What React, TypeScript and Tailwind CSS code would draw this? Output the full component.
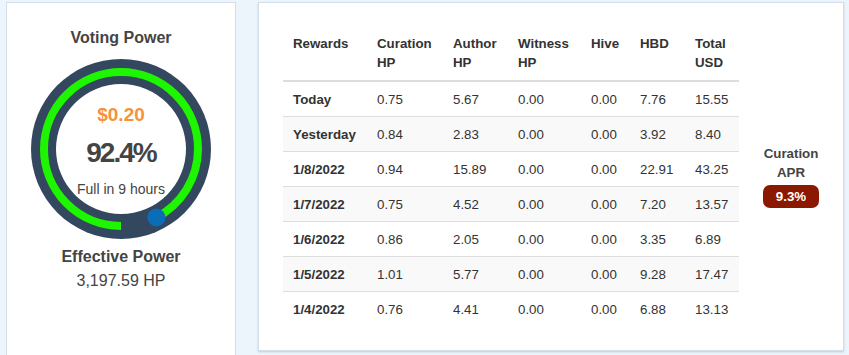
const rows = [
  { label: "Today", cur: "0.75", author: "5.67", witness: "0.00", hive: "0.00", hbd: "7.76", total: "15.55" },
  { label: "Yesterday", cur: "0.84", author: "2.83", witness: "0.00", hive: "0.00", hbd: "3.92", total: "8.40" },
  { label: "1/8/2022", cur: "0.94", author: "15.89", witness: "0.00", hive: "0.00", hbd: "22.91", total: "43.25" },
  { label: "1/7/2022", cur: "0.75", author: "4.52", witness: "0.00", hive: "0.00", hbd: "7.20", total: "13.57" },
  { label: "1/6/2022", cur: "0.86", author: "2.05", witness: "0.00", hive: "0.00", hbd: "3.35", total: "6.89" },
  { label: "1/5/2022", cur: "1.01", author: "5.77", witness: "0.00", hive: "0.00", hbd: "9.28", total: "17.47" },
  { label: "1/4/2022", cur: "0.76", author: "4.41", witness: "0.00", hive: "0.00", hbd: "6.88", total: "13.13" },
];

const headers = ["Rewards", "Curation HP", "Author HP", "Witness HP", "Hive", "HBD", "Total USD"];

function Gauge({ pct }: { pct: number }) {
  const r = 77;
  const circ = 2 * Math.PI * r;
  const dash = circ * pct;
  // dot sits at the end of the arc, arc starts at 6 o'clock going clockwise
  const angle = ((90 + 360 * pct) * Math.PI) / 180;
  const dx = 90 + r * Math.cos(angle);
  const dy = 90 + r * Math.sin(angle);

  return (
    <svg width="180" height="180" viewBox="0 0 180 180" className="block">
      <circle cx="90" cy="90" r="90" fill="#33475e" />
      <circle cx="90" cy="90" r="65" fill="#ffffff" />
      <circle
        cx="90"
        cy="90"
        r={r}
        fill="none"
        stroke="#1ef500"
        strokeWidth="8"
        strokeDasharray={`${dash} ${circ}`}
        transform="rotate(90 90 90)"
      />
      <circle cx={dx} cy={dy} r="9" fill="#0b6db7" />
      <text x="90" y="61.5" textAnchor="middle" className="fill-[#f7923a] font-bold text-[19px]">
        $0.20
      </text>
      <text x="90" y="103.3" textAnchor="middle" className="fill-[#444] font-bold text-[28px] tracking-[-2px]">
        92.4%
      </text>
      <text x="90" y="135" textAnchor="middle" className="fill-[#444] text-[14px]">
        Full in 9 hours
      </text>
    </svg>
  );
}

export default function App() {
  return (
    <div className="h-screen bg-[#edf5fc] font-['Liberation_Sans',Arial,sans-serif] overflow-hidden">
      <div className="flex items-start gap-[22px] pt-[2px] pl-[6px]">
        <div className="w-[230px] h-[353px] shrink-0 bg-white border border-b-0 border-[#d3dfea] flex flex-col items-center pt-[26px]">
          <div className="text-[16px] leading-[18px] font-bold text-[#444]">Voting Power</div>
          <div className="mt-[12px]">
            <Gauge pct={0.924} />
          </div>
          <div className="mt-[9px] text-[16px] leading-[18px] font-bold text-[#444]">Effective Power</div>
          <div className="mt-[6px] text-[16px] leading-[18px] text-[#444]">3,197.59 HP</div>
        </div>

        <div className="w-[586px] h-[349px] shrink-0 bg-white border border-[#d3dfea] shadow-[0_1px_2px_rgba(0,0,0,0.18)] flex pl-[24px] pt-[23px]">
          <table className="table-fixed border-collapse w-[456px] self-start text-[13.3px] text-[#333]">
            <colgroup>
              <col className="w-[84px]" />
              <col className="w-[76px]" />
              <col className="w-[65px]" />
              <col className="w-[73px]" />
              <col className="w-[49px]" />
              <col className="w-[55px]" />
              <col className="w-[54px]" />
            </colgroup>
            <thead>
              <tr>
                {headers.map((h) => (
                  <th
                    key={h}
                    className="text-left align-top font-bold pl-[10px] pr-[4px] py-[7.5px] leading-[19.5px] border-b-2 border-[#ddd]"
                  >
                    {h}
                  </th>
                ))}
              </tr>
            </thead>
            <tbody>
              {rows.map((row, i) => (
                <tr key={row.label} className={i % 2 === 1 ? "bg-[#f9f9f9]" : ""}>
                  <td className="pl-[10px] py-[7.5px] leading-[19px] border-t border-[#ddd] font-bold">{row.label}</td>
                  <td className="pl-[10px] py-[7.5px] leading-[19px] border-t border-[#ddd]">{row.cur}</td>
                  <td className="pl-[10px] py-[7.5px] leading-[19px] border-t border-[#ddd]">{row.author}</td>
                  <td className="pl-[10px] py-[7.5px] leading-[19px] border-t border-[#ddd]">{row.witness}</td>
                  <td className="pl-[10px] py-[7.5px] leading-[19px] border-t border-[#ddd]">{row.hive}</td>
                  <td className="pl-[10px] py-[7.5px] leading-[19px] border-t border-[#ddd]">{row.hbd}</td>
                  <td className="pl-[10px] py-[7.5px] leading-[19px] border-t border-[#ddd]">{row.total}</td>
                </tr>
              ))}
            </tbody>
          </table>

          <div className="flex-1 flex flex-col items-center justify-center pb-[24px]">
            <div className="text-[13.3px] leading-[19px] font-bold text-[#444] text-center">
              Curation
              <br />
              APR
            </div>
            <span className="mt-[3px] w-[56px] h-[23px] rounded-[7px] bg-[#8b1800] text-white font-bold text-[13.3px] flex items-center justify-center">
              9.3%
            </span>
          </div>
        </div>
      </div>
    </div>
  );
}
